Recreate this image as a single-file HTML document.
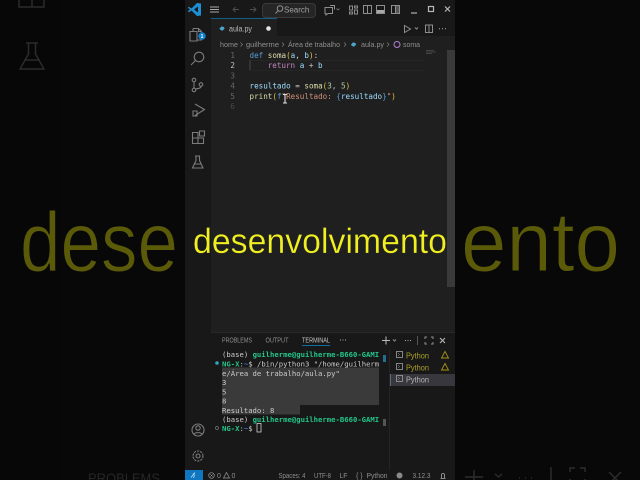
<!DOCTYPE html>
<html><head><meta charset="utf-8">
<style>
html,body{margin:0;padding:0;width:640px;height:480px;overflow:hidden;background:#070707}
svg{display:block;position:absolute;left:0;top:0}
text{white-space:pre}
.m{font-family:"DejaVu Sans Mono","Liberation Mono",monospace;font-size:7.6px}
.t{font-family:"DejaVu Sans Mono","Liberation Mono",monospace;font-size:7.25px;fill:#cccccc}
.u{font-family:"Liberation Sans","DejaVu Sans",sans-serif;font-size:7px;fill:#8f8f8f}
.g{font-weight:bold;fill:#23c488}
.ic{fill:none;stroke:#8e8e8e;stroke-width:1}
.ab{fill:none;stroke:#7c7c7c;stroke-width:1.1}
.soft{filter:blur(.3px)}
</style></head>
<body>
<svg width="640" height="480" viewBox="0 0 640 480" xmlns="http://www.w3.org/2000/svg">
<rect width="640" height="480" fill="#080808"/>
<rect x="0" y="0" width="60" height="480" fill="#070707"/>
<g class="soft">
<g fill="none" stroke="#2b2b2b" stroke-width="1.500">
<path d="M19 -2V7H44V-2M32 -2V7"/>
<path d="M26 43H38M28.500 43V54L20 69H44L35.500 54V43M24 60H40"/>
</g>
<text x="88" y="483" font-family="Liberation Sans,sans-serif" font-size="14" fill="#262626" textLength="72" lengthAdjust="spacingAndGlyphs">PROBLEMS</text>
<g fill="none" stroke="#2e2e2e" stroke-width="1.400">
<path d="M465 477H483M474 470V484M495 474l3.500 3 3.500-3M519 478h1M525 478h1M531 478h1M551 467V484M570 472V468H575M580 468H585V472M570 479V484M585 479V484M609 472L621 484M621 472L609 484"/>
</g>
<g font-family="Liberation Sans,DejaVu Sans,sans-serif" font-size="84" fill="#5a5a09" stroke="#080808" stroke-width="1" paint-order="normal">
<text x="20" y="271" textLength="158" lengthAdjust="spacingAndGlyphs">dese</text>
<text x="461" y="271" textLength="159" lengthAdjust="spacingAndGlyphs">ento</text>
</g>
<!-- window -->
<rect x="185" y="0" width="270" height="480" fill="#1f1f1f"/>
<rect x="185" y="0" width="270" height="18" fill="#181818"/>
<rect x="185" y="18" width="26" height="452" fill="#181818"/>
<rect x="211" y="18" width="244" height="18" fill="#181818"/>
<rect x="211" y="18" width="66" height="18" fill="#1f1f1f"/>
<rect x="211" y="18" width="66" height=".8" fill="#0f6f9f"/>
<!-- logo -->
<path d="M201 3.500L197 3L191.500 8.500L189 6.800L187.800 7.600L190 9.500L187.800 11.400L189 12.200L191.500 10.500L197 16L201 15.500Z" fill="#1c8fd6"/>
<path d="M198 6.500L194 9.500L198 12.500Z" fill="#181818"/>
<path d="M210 7h9M210 9.500h9M210 12h9" stroke="#a8a8a8" stroke-width="1"/>
<path d="M239 9.500h-6M235.500 7l-2.500 2.500 2.500 2.500M250 9.500h6M253.500 7l2.500 2.500-2.500 2.500" stroke="#4f4f4f" fill="none" stroke-width=".9"/>
<rect x="262.500" y="3.500" width="53" height="14" rx="3.500" fill="#252525" stroke="#3a3a3a"/>
<circle cx="280" cy="8.500" r="2.800" class="ic"/><path d="M278 10.800L275.500 13.500" class="ic"/>
<text x="284" y="12.300" class="u" style="font-size:8px;fill:#a0a0a0">Search</text>
<g class="ic">
<path d="M325 7.500h7.500v6h-4.500l-2 1.500v-1.500h-1zM330 5.500h4.500v4"/><path d="M336.500 8.500l1.500 1.500 1.500-1.500" stroke-width=".7"/>
<path d="M349.500 6h3v4h-3zM349.500 12h3v2h-3zM354.500 6h3v2h-3zM354.500 10h3v4h-3z"/>
<rect x="363.500" y="5.500" width="8" height="8"/><path d="M367.500 5.500v8"/>
<rect x="376.500" y="5.500" width="8" height="8"/>
<rect x="391.500" y="5.500" width="8" height="8"/><path d="M395.500 5.500v8"/>
</g>
<rect x="377" y="10" width="7" height="3" fill="#a8a8a8"/>
<rect x="396" y="6" width="3" height="7" fill="#555"/>
<path d="M411 13h6" stroke="#b0b0b0" stroke-width="1.200"/>
<rect x="428.500" y="6.500" width="5" height="5" fill="none" stroke="#b8b8b8" stroke-width="1.200"/>
<path d="M445 6.500l5 5M450 6.500l-5 5" stroke="#b8b8b8" stroke-width="1.200"/>
<!-- activity -->
<g class="ab">
<path d="M193 28.500h5.500l3 3v8.500h-4M198.500 28.500v3h3M193 28.500v3M191.500 31.500h5.500v9.500h-7v-9.500z"/>
<circle cx="199" cy="57" r="4.800"/><path d="M195.500 60.500L191 65"/>
<circle cx="194" cy="80" r="1.800"/><circle cx="194" cy="90" r="1.800"/><circle cx="201" cy="84.500" r="1.800"/><path d="M194 82v6M201 86.500c0 2-3 2-6 2.500"/>
<path d="M195 104l9.500 5.500-9.500 6M193 111h4v5h-4z"/>
<path d="M192.500 132.500h5.500v5.500h-5.500zM198 138h5.500v5.500H198zM192.500 138h5.500v5.500h-5.500zM199.500 131h5v5h-5z"/>
<path d="M195 156h5M196 156v4.500l-3.500 7.500h10.500l-3.500-7.500V156M194 164h7"/>
<circle cx="198" cy="430" r="6"/><circle cx="198" cy="428" r="2.200"/><path d="M194 434.500c1-2.500 7-2.500 8 0"/>
<circle cx="198" cy="456" r="2"/><circle cx="198" cy="456" r="5" stroke-dasharray="2.200 1"/>
</g>
<circle cx="202" cy="36" r="3.800" fill="#0f7fc9"/>
<text x="202" y="38" font-family="Liberation Sans,sans-serif" font-size="5" font-weight="bold" fill="#fff" text-anchor="middle">1</text>
<!-- tab -->
<path d="M219.500 28.500l2.200-2.300 2.200.9.800 1.400-2.200 2.300-2.200-.9z" fill="#4aa5c8"/>
<text x="229" y="31.300" class="u" style="font-size:8px;fill:#b8b8b8" textLength="23" lengthAdjust="spacingAndGlyphs">aula.py</text>
<circle cx="268.500" cy="28.500" r="2.300" fill="#e5e5e5"/>
<path d="M404.500 25.500l6 3.500-6 3.500z" class="ic"/><path d="M415 27.500l1.500 1.500 1.500-1.500" class="ic" stroke-width=".7"/>
<rect x="425.500" y="25" width="7" height="7.500" class="ic"/><path d="M429 25v7.500" class="ic"/>
<path d="M439 28.800h1M442 28.800h1M445 28.800h1" stroke="#aaa"/>
<!-- breadcrumbs -->
<g class="u" style="font-size:7.500px">
<text x="220" y="47" textLength="18" lengthAdjust="spacingAndGlyphs">home</text>
<text x="246" y="47" textLength="33" lengthAdjust="spacingAndGlyphs">guilherme</text>
<text x="288" y="47" textLength="52" lengthAdjust="spacingAndGlyphs">Área de trabalho</text>
<text x="361" y="47" textLength="23" lengthAdjust="spacingAndGlyphs">aula.py</text>
<text x="403" y="47" textLength="17" lengthAdjust="spacingAndGlyphs">soma</text>
</g>
<path d="M240.500 42.500l2 2-2 2M282 42.500l2 2-2 2M344 42.500l2 2-2 2M387 42.500l2 2-2 2" fill="none" stroke="#808080" stroke-width=".7"/>
<path d="M351 44.500l2.200-2.300 2.200.9.800 1.400-2.200 2.300-2.200-.9z" fill="#4aa5c8"/>
<circle cx="397" cy="44.500" r="3" fill="none" stroke="#b180d7" stroke-width="1"/>
<!-- gutter -->
<g class="m" fill="#666" text-anchor="end">
<text x="235" y="58">1</text><text x="235" y="68" fill="#c0c0c0">2</text><text x="235" y="78.500">3</text><text x="235" y="88.500">4</text><text x="235" y="99">5</text><text x="235" y="109" fill="#484848">6</text>
</g>
<rect x="249.500" y="60" width="1" height="10" fill="#4a4a4a"/>
<path d="M250 60.500H424M250 70.500H424" stroke="#292929" stroke-width=".7"/>
<g class="m" fill="#cfcfcf">
<text x="249.500" y="58"><tspan fill="#569cd6">def</tspan> <tspan fill="#dcdcaa">soma</tspan><tspan fill="#e3c43a">(</tspan><tspan fill="#9cdcfe">a</tspan>, <tspan fill="#9cdcfe">b</tspan><tspan fill="#e3c43a">)</tspan>:</text>
<text x="267.700" y="68"><tspan fill="#c586c0">return</tspan> <tspan fill="#9cdcfe">a</tspan> + <tspan fill="#9cdcfe">b</tspan></text>
<text x="249.500" y="88.500"><tspan fill="#9cdcfe">resultado</tspan> = <tspan fill="#dcdcaa">soma</tspan><tspan fill="#e3c43a">(</tspan><tspan fill="#b5cea8">3</tspan>, <tspan fill="#b5cea8">5</tspan><tspan fill="#e3c43a">)</tspan></text>
<text x="249.500" y="99"><tspan fill="#dcdcaa">print</tspan><tspan fill="#e3c43a">(</tspan><tspan fill="#569cd6">f</tspan><tspan fill="#ce9178">"Resultado: </tspan><tspan fill="#569cd6">{</tspan><tspan fill="#9cdcfe">resultado</tspan><tspan fill="#569cd6">}</tspan><tspan fill="#ce9178">"</tspan><tspan fill="#e3c43a">)</tspan></text>
</g>
<path d="M283 94.500h4M283 103h4M285 94.500v8.500" stroke="#e0e0e0" stroke-width="1.100"/>
<!-- minimap & scrollbar -->
<path d="M426 50.500h8M426 52h10M426 53.500h6" stroke="#666" stroke-width=".6"/>
<rect x="447" y="50" width="8" height="237" fill="#3a3a3a"/>
<!-- panel -->
<rect x="211" y="332" width="244" height="138" fill="#181818"/>
<rect x="211" y="332" width="244" height=".8" fill="#2c2c2c"/>
<text x="222" y="342.500" class="u" textLength="30" lengthAdjust="spacingAndGlyphs">PROBLEMS</text>
<text x="265.500" y="342.500" class="u" textLength="23" lengthAdjust="spacingAndGlyphs">OUTPUT</text>
<text x="302" y="342.500" class="u" style="fill:#c4c4c4" textLength="28" lengthAdjust="spacingAndGlyphs">TERMINAL</text>
<rect x="302" y="345" width="28" height="1" fill="#0f6f9f"/>
<path d="M340 340h1M342.500 340h1M345 340h1" stroke="#aaa"/>
<path d="M382 340.500h8M386 336.500v8" stroke="#bbb" stroke-width="1"/>
<path d="M393 339.500l1.500 1.500 1.500-1.500" class="ic" stroke-width=".7"/>
<path d="M405 340.500h1M407.500 340.500h1M410 340.500h1" stroke="#aaa"/>
<path d="M417.500 336v9" stroke="#555"/>
<path d="M425 339v-2h2M431 337h2v2M425 342v2h2M433 342v2h-2" class="ic"/>
<path d="M440 338l5 5M445 338l-5 5" stroke="#bbb"/>
<!-- selection -->
<path d="M222 367.500H379V405H300V414.500H222Z" fill="#3a3a3a"/>
<g class="t">
<text x="222" y="357">(base) <tspan class="g">guilherme@guilherme-B660-GAMI</tspan></text>
<text x="222" y="366.500"><tspan class="g">NG-X</tspan>:<tspan fill="#3b8eea">~</tspan>$ /bin/python3 "/home/guilherm</text>
<text x="222" y="376">e/Área de trabalho/aula.py"</text>
<text x="222" y="385">3</text>
<text x="222" y="394.500">5</text>
<text x="222" y="403.500">8</text>
<text x="222" y="413">Resultado: 8</text>
<text x="222" y="422">(base) <tspan class="g">guilherme@guilherme-B660-GAMI</tspan></text>
<text x="222" y="431"><tspan class="g">NG-X</tspan>:<tspan fill="#3b8eea">~</tspan>$</text>
</g>
<rect x="257" y="423.500" width="4" height="8.500" fill="none" stroke="#d0d0d0" stroke-width=".8"/>
<circle cx="217" cy="363" r="1.800" fill="#2aa6c0"/>
<circle cx="217" cy="428" r="1.500" fill="none" stroke="#777" stroke-width=".7"/>
<rect x="383" y="355" width="3" height="7" fill="#1f6f8f"/>
<rect x="383" y="419" width="3" height="7" fill="#555"/>
<path d="M389.500 350V470" stroke="#2a2a2a" stroke-width=".8"/>
<rect x="390" y="374" width="65" height="12" fill="#37373d"/>
<rect x="390" y="374" width="1" height="12" fill="#5a6a80"/>
<g fill="none" stroke="#a0a0a0" stroke-width=".8">
<rect x="396.500" y="351.500" width="6" height="6"/><rect x="396.500" y="363.500" width="6" height="6"/><rect x="396.500" y="375.500" width="6" height="6"/>
<path d="M398 353l1.500 1.500-1.500 1.500M398 365l1.500 1.500-1.500 1.500M398 377l1.500 1.500-1.500 1.500" stroke-width=".5"/>
</g>
<g font-family="Liberation Sans,sans-serif" font-size="8">
<text x="406" y="358.500" fill="#a8a02a" textLength="23" lengthAdjust="spacingAndGlyphs">Python</text>
<text x="406" y="370.500" fill="#a8a02a" textLength="23" lengthAdjust="spacingAndGlyphs">Python</text>
<text x="406" y="382.500" fill="#b5b5b5" textLength="23" lengthAdjust="spacingAndGlyphs">Python</text>
</g>
<path d="M445 351.500l3.500 6.500h-7zM445 363.500l3.500 6.500h-7z" fill="none" stroke="#a89418" stroke-width=".9"/>
<!-- status -->
<rect x="185" y="470" width="270" height="10" fill="#181818"/>
<rect x="185" y="470" width="18" height="10" fill="#0f76c0"/>
<path d="M191 477.500l4-5M193.500 478l1-2.500M193 473.500l1.500 2" stroke="#cfe6f7" stroke-width=".7"/>
<circle cx="211.500" cy="475.500" r="2.800" fill="none" stroke="#999" stroke-width=".7"/>
<path d="M210 474l3 3M213 474l-3 3" stroke="#999" stroke-width=".5"/>
<path d="M226.500 472.500l3 5.500h-6z" fill="none" stroke="#999" stroke-width=".7"/>
<g class="u">
<text x="217" y="478">0</text>
<text x="231.500" y="478">0</text>
<text x="278.500" y="478" textLength="27" lengthAdjust="spacingAndGlyphs">Spaces: 4</text>
<text x="314" y="478" textLength="17" lengthAdjust="spacingAndGlyphs">UTF-8</text>
<text x="339.500" y="478" textLength="8" lengthAdjust="spacingAndGlyphs">LF</text>
<text x="356" y="478">{ }</text>
<text x="366.500" y="478" textLength="21" lengthAdjust="spacingAndGlyphs">Python</text>
<text x="412.500" y="478" textLength="18" lengthAdjust="spacingAndGlyphs">3.12.3</text>
</g>
<circle cx="399.500" cy="475.500" r="3" fill="#8a8a8a"/>
<path d="M440.500 478.500h5M441.500 478v-3c0-2 3-2 3 0v3" fill="none" stroke="#aaa" stroke-width=".8"/>
</g>
<!-- caption -->
<text x="193" y="253" font-family="Liberation Sans,DejaVu Sans,sans-serif" font-size="35.500" fill="#f0f020" stroke="#1f1f1f" stroke-width=".3" textLength="254" lengthAdjust="spacingAndGlyphs">desenvolvimento</text>
</svg>
</body></html>
